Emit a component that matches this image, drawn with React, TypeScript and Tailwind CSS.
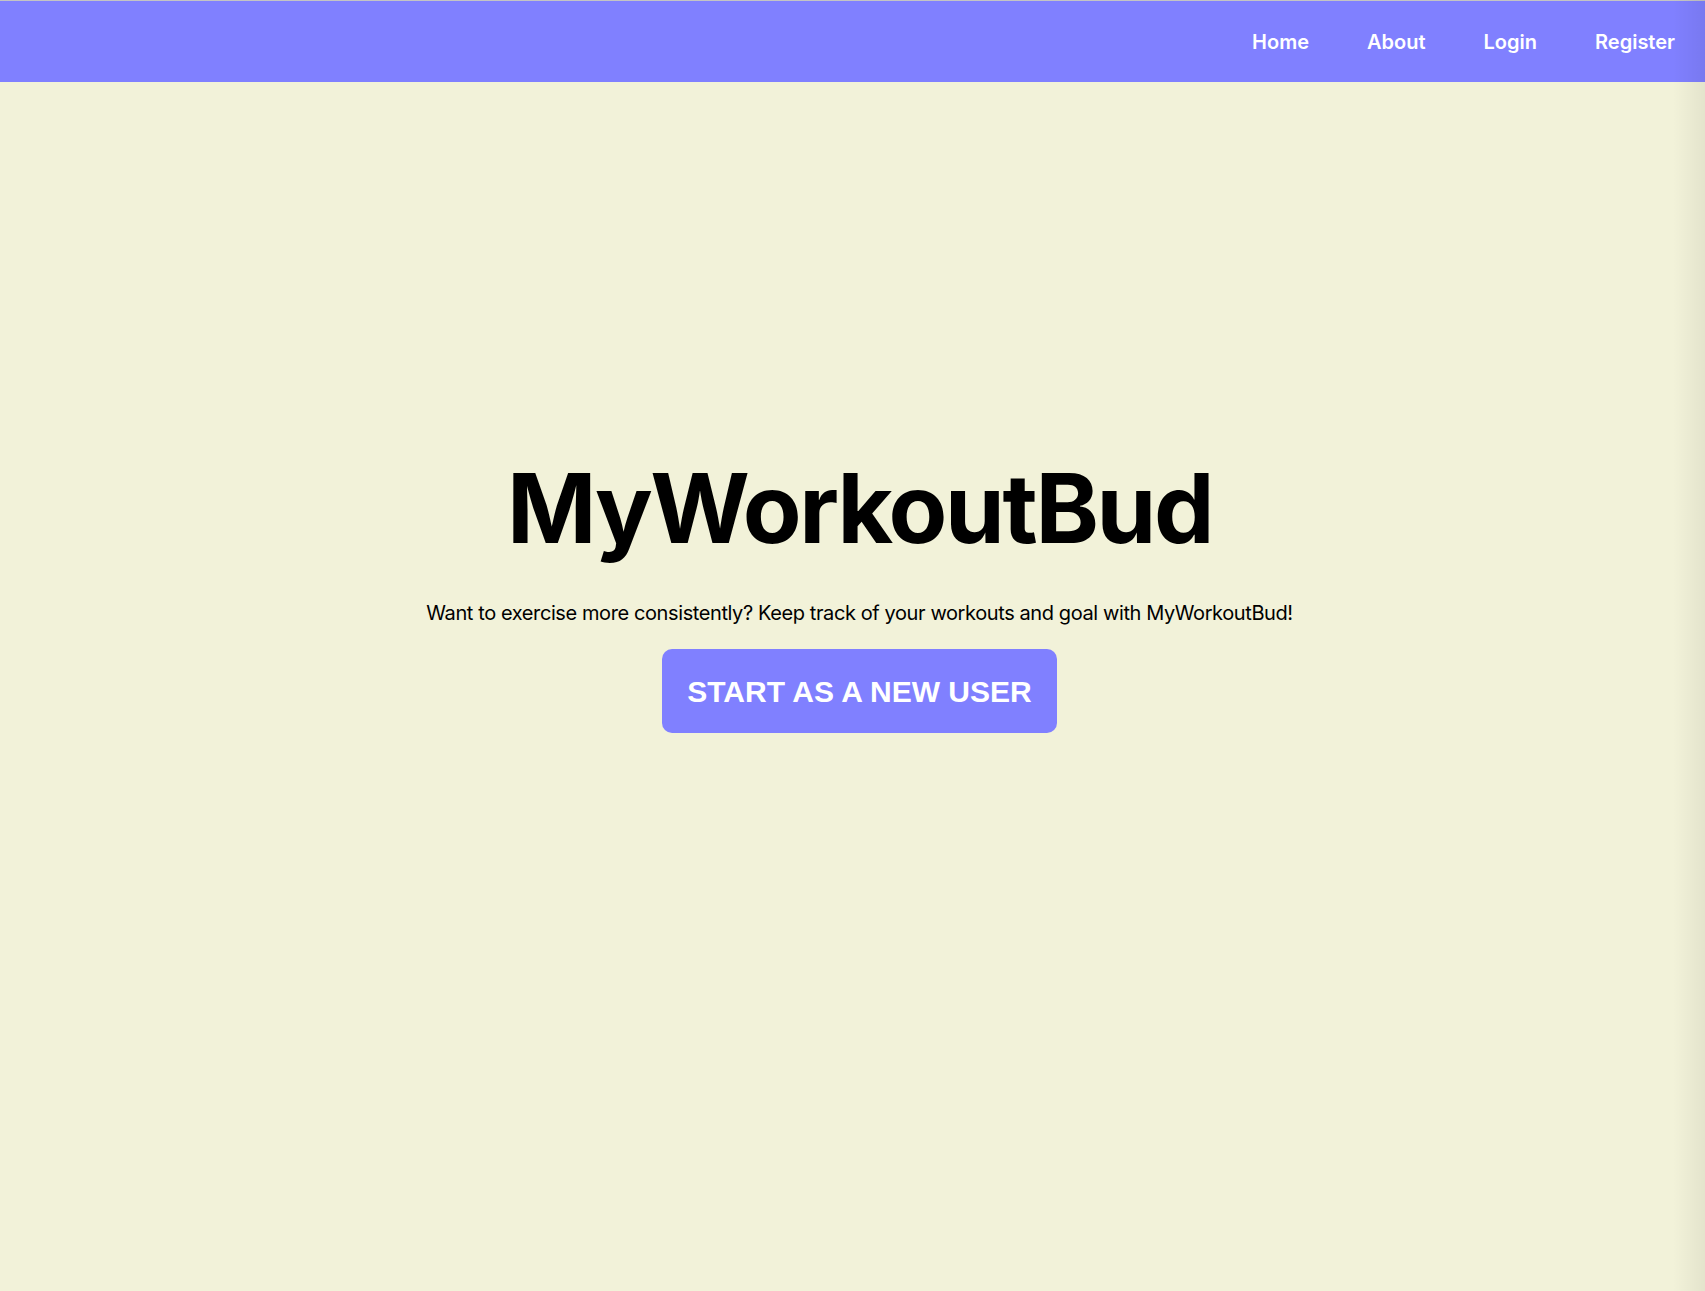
const links = ['Home', 'About', 'Login', 'Register']

export default function App() {
  return (
    <div className="relative min-h-[1291px] bg-[#f2f2d9] font-['Inter',sans-serif] text-black">
      {/* top nav */}
      <nav className="flex h-[82px] items-center justify-end border-t border-[#c4c4c4] bg-[#8080ff] pr-[1px]">
        {links.map((l) => (
          <a key={l} href="#" className="px-[29px] text-[20px] font-semibold text-white">
            {l}
          </a>
        ))}
      </nav>

      <main className="flex flex-col items-center pl-[14px] pt-[378px]">
        <h1 className="text-[96px] font-bold leading-none tracking-[-0.025em]">MyWorkoutBud</h1>
        <p className="mt-[47px] text-[20px] leading-[20px] tracking-[-0.02em]">
          Want to exercise more consistently? Keep track of your workouts and goal with MyWorkoutBud!
        </p>
        <button className="mt-[26px] flex h-[84px] items-center rounded-[10px] bg-[#8080ff] px-[25px] font-['Liberation_Sans',Arial,sans-serif] text-[30px] font-bold text-white">
          START AS A NEW USER
        </button>
      </main>

      {/* window edge shade */}
      <div className="pointer-events-none absolute inset-y-0 right-0 w-[32px] bg-gradient-to-r from-transparent to-black/[0.06]" />
    </div>
  )
}
